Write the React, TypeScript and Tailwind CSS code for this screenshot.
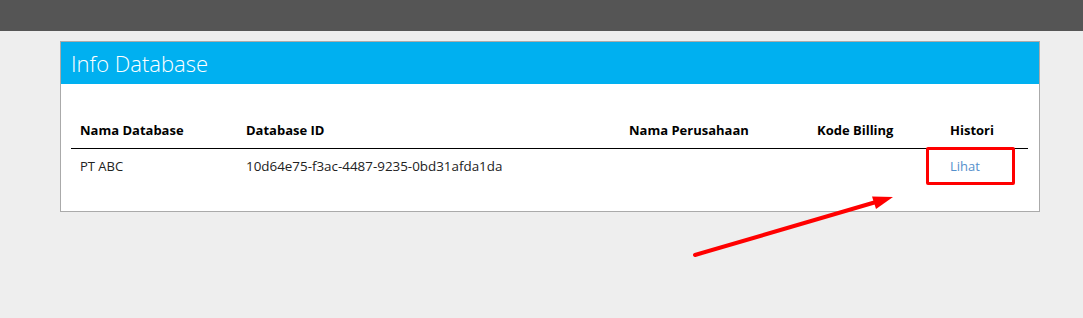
import React from "react";

export default function App() {
  const font = { fontFamily: '"Open Sans", "Noto Sans", sans-serif' };
  return (
    <div className="relative min-h-[318px] w-full bg-[#eeeeee]" style={font}>
      <div className="h-[31px] bg-[#555555]" />
      <div className="ml-[60px] mt-[10px] w-[980px] border border-[#aaaaaa] bg-white">
        <div className="flex h-[42px] items-center bg-[#00b0f0] pl-[10px]">
          <span className="text-[22px] font-light leading-none text-white">Info Database</span>
        </div>
        <div className="pl-[10px] pr-[11px] pt-[28px] pb-[28px]">
          <table className="w-full table-fixed border-collapse text-[13px] text-black">
            <colgroup>
              <col className="w-[166px]" />
              <col className="w-[383px]" />
              <col className="w-[188px]" />
              <col className="w-[133px]" />
              <col className="w-[87px]" />
            </colgroup>
            <thead>
              <tr className="border-b border-black">
                <th className="py-[8px] pl-[9px] text-left font-bold leading-[20px]">Nama Database</th>
                <th className="py-[8px] pl-[9px] text-left font-bold leading-[20px]">Database ID</th>
                <th className="py-[8px] pl-[9px] text-left font-bold leading-[20px]">Nama Perusahaan</th>
                <th className="py-[8px] pl-[9px] text-left font-bold leading-[20px]">Kode Billing</th>
                <th className="py-[8px] pl-[9px] text-left font-bold leading-[20px]">Histori</th>
              </tr>
            </thead>
            <tbody>
              <tr>
                <td className="py-[8px] pl-[9px] leading-[18px] text-[#222]">PT ABC</td>
                <td className="py-[8px] pl-[9px] text-[13.4px] leading-[18px] text-[#222]">10d64e75-f3ac-4487-9235-0bd31afda1da</td>
                <td className="py-[8px] pl-[9px] leading-[18px]"></td>
                <td className="py-[8px] pl-[9px] leading-[18px]"></td>
                <td className="py-[8px] pl-[9px] leading-[18px]">
                  <a className="text-[#5590cc]">Lihat</a>
                </td>
              </tr>
            </tbody>
          </table>
        </div>
      </div>
      <div className="absolute left-[926px] top-[147px] h-[38px] w-[89px] rounded-[2px] border-[3px] border-[#ff0000]" />
      <svg className="pointer-events-none absolute left-0 top-0" width="1083" height="318">
        <line x1="695" y1="255" x2="876" y2="202" stroke="#ff0000" strokeWidth="4" strokeLinecap="round" />
        <polygon points="893,197 872,196.5 876,209" fill="#ff0000" />
      </svg>
    </div>
  );
}
